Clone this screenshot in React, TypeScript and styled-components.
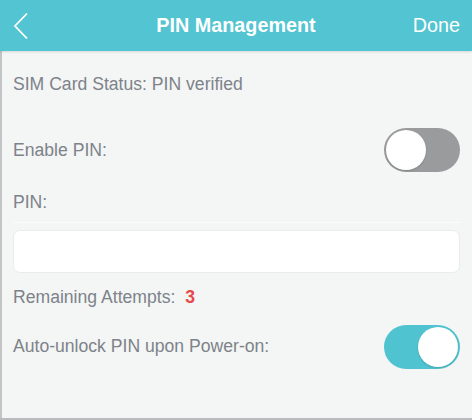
import styled, { createGlobalStyle } from "styled-components";

const GlobalStyle = createGlobalStyle`
    html, body {
        margin: 0;
        padding: 0;
        background: #f4f5f5;
    }
    body {
        font-family: "Liberation Sans", Arial, Helvetica, sans-serif;
    }
`;

const Screen = styled.div`
    width: 472px;
    height: 420px;
    box-sizing: border-box;
    background: #f4f5f5;
    border-bottom: 2px solid #b9bbbc;
    display: flex;
    flex-direction: column;
    overflow: hidden;
`;

const Header = styled.header`
    height: 51px;
    flex: none;
    background: #53c4d1;
    display: grid;
    grid-template-columns: 80px 1fr 80px;
    align-items: center;
    color: #ffffff;
    box-shadow: 0 1px 2px rgba(0, 0, 0, 0.12);
    position: relative;
    z-index: 1;

    .back {
        display: flex;
        align-items: center;
        padding-left: 13px;
        height: 100%;
    }
    h1 {
        margin: 0;
        font-size: 19.8px;
        font-weight: bold;
        text-align: center;
    }
    .done {
        text-align: right;
        padding-right: 12px;
        font-size: 19.8px;
    }
`;

const Body = styled.main`
    flex: 1;
    border-left: 2px solid #c2c4c5;
    padding: 0 11px 0 11px;
    display: flex;
    flex-direction: column;
`;

const Row = styled.div<{ $h: number; $line?: boolean }>`
    height: ${(p) => p.$h}px;
    display: flex;
    align-items: center;
    justify-content: space-between;
    font-size: 17.6px;
    color: #7d8389;
    box-sizing: border-box;
    border-bottom: ${(p) => (p.$line ? "1px solid #fbfbfb" : "none")};

    .count {
        color: #e8494b;
        font-weight: bold;
        margin-left: 10px;
    }
`;

const PinInput = styled.input`
    margin-top: 7px;
    height: 43px;
    box-sizing: border-box;
    width: 447px;
    background: #ffffff;
    border: 1px solid #e9ebec;
    border-radius: 7px;
    outline: none;
    font-size: 16px;
    padding: 0 10px;
`;

const Track = styled.div<{ $on: boolean }>`
    width: 76px;
    height: 44px;
    border-radius: 22px;
    box-sizing: border-box;
    background: ${(p) => (p.$on ? "#4fc3cf" : "#9a9b9d")};
    padding: 2px;
    display: flex;
    justify-content: ${(p) => (p.$on ? "flex-end" : "flex-start")};
    margin-right: 1px;
`;

const Knob = styled.div`
    width: 40px;
    height: 40px;
    border-radius: 50%;
    background: #ffffff;
    box-shadow: 0 1px 2px rgba(0, 0, 0, 0.15);
`;

function Toggle({ on }: { on: boolean }) {
    return (
        <Track $on={on}>
            <Knob />
        </Track>
    );
}

function App() {
    return (
        <>
            <GlobalStyle />
            <Screen>
                <Header>
                    <div className="back">
                        <svg width="16" height="28" viewBox="0 0 16 28">
                            <path d="M14 1.5 L2 14 L14 26.5" fill="none" stroke="#ffffff" strokeWidth="1.8" />
                        </svg>
                    </div>
                    <h1>PIN Management</h1>
                    <div className="done">Done</div>
                </Header>
                <Body>
                    <Row $h={66}>SIM Card Status: PIN verified</Row>
                    <Row $h={66}>
                        Enable PIN:
                        <Toggle on={false} />
                    </Row>
                    <Row $h={40} $line>PIN:</Row>
                    <PinInput type="password" />
                    <Row $h={48}>
                        <span>
                            Remaining Attempts:<span className="count">3</span>
                        </span>
                    </Row>
                    <Row $h={51}>
                        Auto-unlock PIN upon Power-on:
                        <Toggle on={true} />
                    </Row>
                </Body>
            </Screen>
        </>
    );
}

export default App;
